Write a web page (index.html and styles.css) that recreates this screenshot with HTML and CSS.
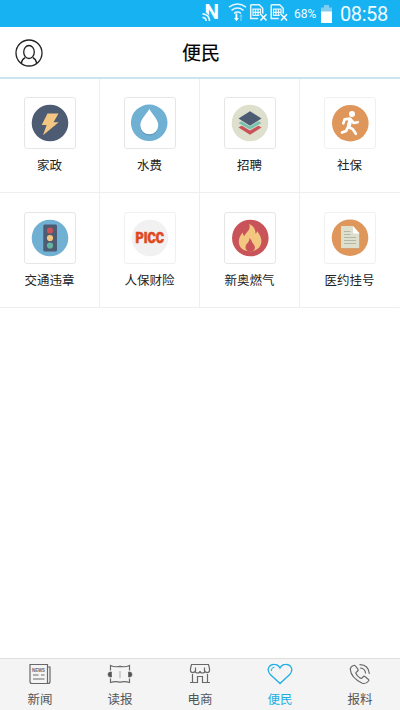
FILE: index.html
```html
<!DOCTYPE html>
<html lang="zh-CN">
<head>
<meta charset="utf-8">
<title>便民</title>
<link rel="stylesheet" href="styles.css">
</head>
<body>
<div class="app">
  <div class="status">
    <svg class="signals" width="90" height="27" viewBox="0 0 90 27">
      <text class="nfc" x="4.500" y="19" textLength="14.500" lengthAdjust="spacingAndGlyphs">N</text>
      <path d="M0 24V11.500h3a10 10 0 0 1 8 11V24z" fill="#17b2f2"/>
      <path d="M2.500 13.800q6.800.5 7 7.200M2.500 17.300q3.500.3 3.700 3.700" fill="none" stroke="#e4f6ff" stroke-width="1.700"/>
      <path d="M29 7.200q8.500-6.400 17 0M31.500 10.400q6-4.600 12 0M34 13.400q3.500-2.600 7 0" fill="none" stroke="#e4f6ff" stroke-width="1.500"/>
      <path d="M35.500 13.500h1.800v4.500h1.500l-2.400 3.200-2.400-3.200h1.500z" fill="#fff"/>
      <path d="M40.300 21v-4.500h-1.200l1.900-2.600 1.900 2.600h-1.200v4.500z" fill="#72cbf1"/>
      <g id="sim">
        <path d="M50.700 4.700h8.500l3.500 3.500v6M50.700 4.700v13.800h7.500" fill="none" stroke="#e4f6ff" stroke-width="1.500"/>
        <path d="M53 9.200h7.500v6.200h-7.500zM55.500 9v6.500M58 9v6.500M53 12.300h7.500" fill="none" stroke="#e4f6ff" stroke-width="1.200"/>
        <path d="M60.500 14.300l6 6.300M66.500 14.300l-6 6.300" stroke="#17b2f2" stroke-width="4"/>
        <path d="M60.500 14.300l6 6.300M66.500 14.300l-6 6.300" stroke="#fff" stroke-width="1.500"/>
      </g>
      <use href="#sim" x="20.500"/>
    </svg>
    <span class="percent">68%</span>
    <svg class="battery" width="11" height="18" viewBox="0 0 11 18"><path d="M3 0h5v2.500h3V7H0V2.500h3z" fill="#7fcdf0"/><path d="M0 6.500h11V18H0z" fill="#fff"/></svg>
    <span class="clock">08:58</span>
  </div>

  <header class="header">
    <svg class="user" width="28" height="28" viewBox="0 0 28 28" fill="none" stroke="#222" stroke-width="1.300"><circle cx="14" cy="14" r="13"/><ellipse cx="14" cy="13" rx="5.300" ry="6.500"/><path d="M6.300 24.300q.7-4.200 3.900-5.700M21.700 24.300q-.7-4.200-3.900-5.700"/></svg>
    <h1 class="title">便民</h1>
  </header>

  <main class="grid">
    <div class="cell">
      <div class="tile"><svg viewBox="0 0 50 50"><circle cx="25" cy="25" r="18.300" fill="#4d5b73"/><path d="M22.500 15.500h11l-5 8.700h5.200L18 37.300l3.600-10.200h-4.900z" fill="#f3c782"/></svg></div>
      <span class="label">家政</span>
    </div>
    <div class="cell">
      <div class="tile"><svg viewBox="0 0 50 50"><circle cx="24.200" cy="24.800" r="18.300" fill="#70b0d3"/><path d="M24.300 12.200c3 5.500 9 10.500 9 16.300a9 9 0 0 1-18 0c0-5.800 6-10.800 9-16.300z" fill="#5995b6"/><path d="M24.300 11c3 5.500 9 10.500 9 16.300a9 9 0 0 1-18 0c0-5.800 6-10.800 9-16.300z" fill="#fff"/></svg></div>
      <span class="label">水费</span>
    </div>
    <div class="cell">
      <div class="tile"><svg viewBox="0 0 50 50"><circle cx="25" cy="25" r="18.300" fill="#dedfcd"/><path d="M13.500 29.500L25 22.500l11.500 7L25 36.800z" fill="#c8545a"/><path d="M13.500 25.700L25 18.500l11.500 7.200L25 32.600z" fill="#dedfcd"/><path d="M13.500 25L25 18l11.500 7L25 31.600z" fill="#76c2ae"/><path d="M13.500 21.500L25 14l11.500 7.500L25 28.500z" fill="#dedfcd"/><path d="M13.500 20.500L25 13.300l11.500 7.200L25 27.700z" fill="#4d5b73"/></svg></div>
      <span class="label">招聘</span>
    </div>
    <div class="cell">
      <div class="tile faint"><svg viewBox="0 0 50 50"><circle cx="25.300" cy="25.200" r="18.300" fill="#df965b"/><g fill="none" stroke="#fff" stroke-width="2.700" stroke-linecap="round" stroke-linejoin="round"><circle cx="27" cy="16" r="1.700"/><path d="M18.300 25.300l1.300-4 5.400-.6 3.700 4.300 4-.8"/><path d="M24.800 22l-1.600 6.700 4.600 2.500 3 4.600M23 29.200l-2 3.800-4 1.600"/><path d="M25.300 22.500l-1.500 5.700" stroke-width="4"/></g></svg></div>
      <span class="label">社保</span>
    </div>
    <div class="cell">
      <div class="tile"><svg viewBox="0 0 50 50"><circle cx="25" cy="25" r="18.300" fill="#70b0d3"/><rect x="18.300" y="11.500" width="13.700" height="27" rx="1.500" fill="#4d5b73"/><circle cx="25" cy="17.500" r="3.100" fill="#c8545a"/><circle cx="25" cy="25" r="3.100" fill="#f3c782"/><circle cx="25" cy="32.500" r="3.100" fill="#64b59f"/></svg></div>
      <span class="label">交通违章</span>
    </div>
    <div class="cell">
      <div class="tile faint"><svg viewBox="0 0 50 50"><circle cx="25" cy="25" r="18.300" fill="#f1f1f1"/><text class="picc" x="10.600" y="30.300" textLength="28.500" lengthAdjust="spacingAndGlyphs">PICC</text></svg></div>
      <span class="label">人保财险</span>
    </div>
    <div class="cell">
      <div class="tile"><svg viewBox="0 0 50 50"><circle cx="25.300" cy="25" r="18.300" fill="#c8545a"/><path d="M24.800 38.300c-6.800 0-11-4-11-9.800 0-4.100 2.200-6.700 4-9 .2 1.800.6 2.800 1.500 3.600 1.700-4.400 6.900-6 4.900-12 4.100 2 6.500 5 6.200 9.500 1.200-.5 1.600-1.500 1.700-2.700 2.400 3.500 4.300 6.300 4.300 10.200 0 6.200-4.800 10.200-11.600 10.200z" fill="#f3c782"/><path d="M25.200 38.500c-3 0-4.700-1.700-4.700-4.300 0-3.600 4.300-4.800 3.900-9.200 2.600 2 2.300 3.900 3.400 5.300 1 1.400 2.100 2.300 2.100 4.200 0 2.500-1.900 4-4.700 4z" fill="#c8545a"/></svg></div>
      <span class="label">新奥燃气</span>
    </div>
    <div class="cell">
      <div class="tile faint"><svg viewBox="0 0 50 50"><circle cx="25" cy="24.700" r="18.300" fill="#df965b"/><path d="M17 14h11l6.800 7v14.800H17z" fill="#bd8052" opacity=".5"/><path d="M17 13h11l6.300 7v15.300H17a1 1 0 0 1-1-1V14a1 1 0 0 1 1-1z" fill="#dedfcd"/><path d="M28 13l6.500 7.500h-5.300q-1.200 0-1.200-1.200z" fill="#fff"/><path d="M19 18.500h6.500M19 21.500h6.500M19 24.500h12M19 27.500h12M19 30.500h12" stroke="#b2b7a8" stroke-width="1.100"/></svg></div>
      <span class="label">医约挂号</span>
    </div>
  </main>

  <nav class="tabs">
    <div class="tab">
      <svg width="26" height="22" viewBox="0 0 26 22" fill="none" stroke="#686868" stroke-width="1.200"><path d="M3 1.500h17.500v19H5q-2 0-2-2z"/><path d="M20.500 4h2.500v14.500q0 2-2 2h-1M6 12h5.500M6 16h11.500M14 12h3.500"/><text class="news" x="5" y="8.500" textLength="13" lengthAdjust="spacingAndGlyphs">NEWS</text></svg>
      <span>新闻</span>
    </div>
    <div class="tab">
      <svg width="26" height="22" viewBox="0 0 26 22" fill="none" stroke="#686868" stroke-width="1.200"><path d="M3.500 7.500V2.500q4.500 2 9.500.8 5 1.200 9.500-.8v5M3.500 15.500v4q4.500-1.500 9.500-.3 5-1.200 9.500.3v-4"/><path d="M13 8v7" stroke="#aaa" stroke-width="1"/><path d="M4.500 9H3.300a2.300 2.500 0 0 0 0 5H4.500zM21.500 9h1.200a2.300 2.500 0 0 1 0 5H21.500z" fill="#555" stroke="#555" stroke-width=".6"/></svg>
      <span>读报</span>
    </div>
    <div class="tab">
      <svg width="26" height="22" viewBox="0 0 26 22" fill="none" stroke="#686868" stroke-width="1.200"><path d="M4.500 1.500h17l1 4v2.500a2.400 2 0 0 1-4.700 0 2.400 2 0 0 1-4.800 0 2.400 2 0 0 1-4.800 0 2.400 2 0 0 1-4.700 0V5.500zM8.500 4.500V8M17.500 4.500V8M5.500 11v8.500M20.500 11v8.500M3 19.500h7.500v-6h5v6h7.500"/></svg>
      <span>电商</span>
    </div>
    <div class="tab active">
      <svg width="26" height="22" viewBox="0 0 26 22" fill="none" stroke="#21aee4" stroke-width="1.300"><path d="M13 20.500L3.300 11.600C-1.500 6 3 1 7.300 1.300 10 1.400 12 3 13 5c1-2 3-3.600 5.700-3.700C23 1 27.500 6 22.700 11.600z"/><path d="M4.200 8q0-3.500 3.300-4" stroke-width="1"/></svg>
      <span>便民</span>
    </div>
    <div class="tab">
      <svg width="26" height="22" viewBox="0 0 26 22" fill="none" stroke="#686868" stroke-width="1.200" stroke-linecap="round" stroke-linejoin="round"><path d="M6.500 2.500Q3.300 3.500 3.300 6.500q.8 8.500 12 13.700 3.700 1.200 6.200-2.200.7-1-.3-1.800l-3.300-2.700q-1-.7-1.900.3l-1 1.200q-.8.8-1.800.1-3.200-2-4.200-4.600-.4-1 .5-1.600l1-.7q1-.7.5-1.800L8.500 3Q7.800 2 6.500 2.500zM13.500 5q4.500.5 5 5M13 1.700q8.500.3 9.300 8.800"/></svg>
      <span>报料</span>
    </div>
  </nav>
</div>
</body>
</html>
```

FILE: styles.css
```css
* { box-sizing: border-box; }

body {
  margin: 0;
  background: #fff;
  font-family: Roboto, "Noto Sans CJK SC", sans-serif;
}

.app {
  display: flex;
  flex-direction: column;
  width: 400px;
  height: 710px;
}

.status {
  display: flex;
  align-items: center;
  height: 27px;
  padding-left: 200px;
  background: #17b2f2;
  color: #f2fbff;
}

.signals { flex: none; }
.nfc { font: 700 21px Roboto, sans-serif; fill: #fff; }
.percent { width: 27px; margin-left: 4px; font-size: 12px; white-space: nowrap; }
.battery { flex: none; margin-top: 1px; }
.clock { margin-left: 8px; padding-top: 1px; font-size: 20px; line-height: 26px; letter-spacing: -0.4px; }

.header {
  display: grid;
  grid-template-columns: 43px 1fr 43px;
  align-items: center;
  height: 52px;
  border-bottom: 2px solid #cbe5ee;
}

.user { margin: 1px 0 0 15px; }

.title {
  margin: 4px 0 0 2px;
  font-size: 19px;
  font-weight: 400;
  line-height: 28px;
  text-align: center;
  color: #000;
  -webkit-text-stroke: 0.2px #000;
}

.grid {
  display: grid;
  grid-template-columns: repeat(4, 100px);
  grid-template-rows: 114px 115px;
  flex: 1;
  align-content: start;
}

.cell {
  display: flex;
  flex-direction: column;
  align-items: center;
  padding-top: 18px;
  border-right: 1px solid #eee;
  border-bottom: 1px solid #eee;
}

.cell:nth-child(4n) { border-right-color: transparent; }
.cell:nth-child(n+5) { padding-top: 19px; }

.tile {
  width: 52px;
  height: 52px;
  border: 1px solid #e6e6e6;
  border-radius: 3px;
}

.tile.faint { border-color: #f0f0f0; }
.tile svg { display: block; width: 50px; height: 50px; }
.picc { font: 900 14.500px Roboto, sans-serif; fill: #df481d; stroke: #df481d; stroke-width: .6px; }

.label {
  margin-top: 7px;
  font-size: 12.500px;
  line-height: 20px;
  color: #222;
}

.tabs {
  display: grid;
  grid-template-columns: repeat(5, 1fr);
  height: 52px;
  border-top: 1px solid #dedede;
  background: #f4f4f4;
}

.tab {
  display: flex;
  flex-direction: column;
  align-items: center;
  padding-top: 4px;
  font-size: 12.500px;
  line-height: 20px;
  color: #555;
}

.tab span { margin-top: 5px; }
.tab.active { color: #21aee4; }
.news { font: 700 5px "Liberation Sans", sans-serif; fill: #686868; stroke: none; }
```
